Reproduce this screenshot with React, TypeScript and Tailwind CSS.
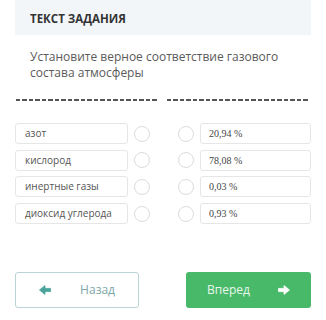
const pairs = [
  { left: "азот", right: "20,94 %" },
  { left: "кислород", right: "78,08 %" },
  { left: "инертные газы", right: "0,03 %" },
  { left: "диоксид углерода", right: "0,93 %" },
] as const;

function Dot() {
  return <span className="h-[16px] w-[16px] shrink-0 rounded-full border border-[#dcdcdc] bg-white" />;
}

// chunky arrow, like the old icon font one
function Arrow({ left, className }: { left?: boolean; className?: string }) {
  return (
    <svg viewBox="0 0 12 10" className={className} style={left ? { transform: "scaleX(-1)" } : undefined}>
      <path d="M0.5 3.4H6V0.6L11.5 5L6 9.4V6.6H0.5Z" fill="currentColor" stroke="currentColor" strokeWidth="0.8" strokeLinejoin="round" />
    </svg>
  );
}

export default function App() {
  return (
    <main className="h-[320px] w-[326px] overflow-hidden bg-white px-[15px] font-['Open_Sans',sans-serif] text-[#555]">
      <div className="flex h-[35px] items-center bg-[#f3f6f9] px-[15px] pt-[3px]">
        <h2 className="text-[11.5px] font-bold text-[#333]">ТЕКСТ ЗАДАНИЯ</h2>
      </div>

      <p className="mt-[14px] px-[15px] text-[12px] leading-[16px] text-[#5a5a5a]">
        Установите верное соответствие газового состава атмосферы
      </p>

      <div className="mt-[18px] flex h-[2px] gap-[8px] px-[1px]">
        <span className="h-full flex-1 bg-[repeating-linear-gradient(90deg,#555_0_4px,transparent_4px_6px,#555_6px_11px,transparent_11px_13px)]" />
        <span className="h-full flex-1 bg-[repeating-linear-gradient(90deg,#555_0_4px,transparent_4px_6px,#555_6px_11px,transparent_11px_13px)]" />
      </div>

      <div className="mt-[22px] flex flex-col gap-[5.7px]">
        {pairs.map((p) => (
          <div key={p.left} className="flex h-[21px] items-center">
            <div className="flex h-full flex-1 items-center whitespace-nowrap rounded-[3px] border border-[#e6e6e6] px-[9px] text-[10px] text-[#555]">
              {p.left}
            </div>
            <span className="w-[6px]" />
            <Dot />
            <span className="w-[28px]" />
            <Dot />
            <span className="w-[6px]" />
            <div className="flex h-full flex-1 items-center rounded-[3px] border border-[#e6e6e6] px-[8px] font-['Liberation_Serif',serif] text-[10px] text-[#444]">
              {p.right}
            </div>
          </div>
        ))}
      </div>

      <div className="mt-[48px] flex items-center justify-between">
        <button className="flex h-[36px] w-[124px] items-center justify-between rounded-[3px] border border-[#bcd3d3] bg-white px-[23px] text-[12px] text-[#7ea7a7]">
          <Arrow left className="h-[10px] w-[12px] text-[#4aa39b]" />
          <span>Назад</span>
        </button>
        <button className="flex h-[36px] w-[125px] items-center justify-between rounded-[3px] bg-[#48b968] px-[21px] text-[12px] text-[#e8f6ec]">
          <span>Вперед</span>
          <Arrow className="h-[10px] w-[12px] text-white" />
        </button>
      </div>
    </main>
  );
}
